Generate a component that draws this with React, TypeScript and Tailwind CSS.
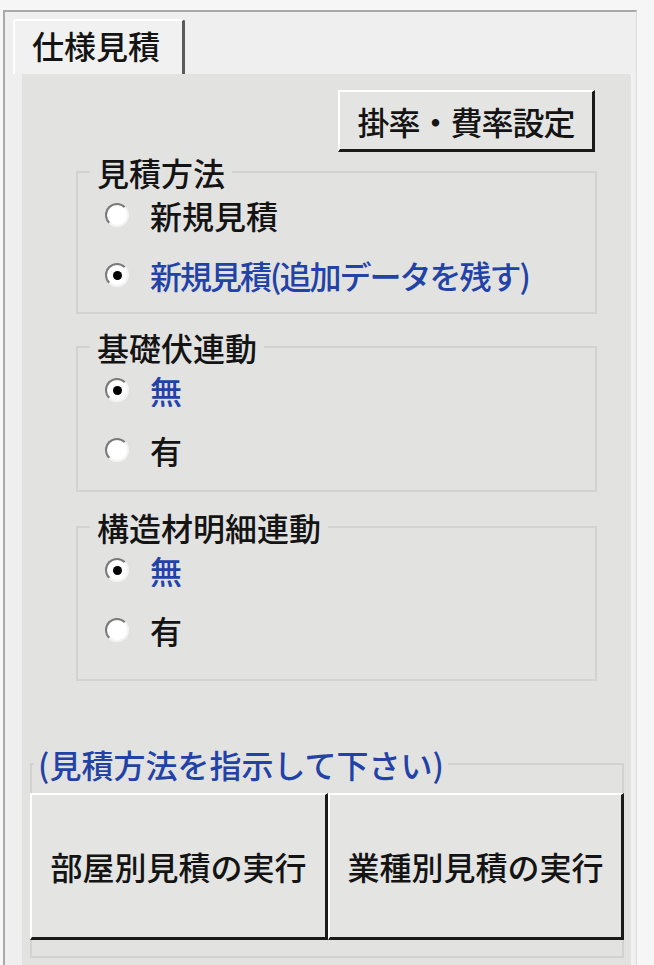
import React from "react";

const font = "font-['Noto_Sans_CJK_JP','Noto_Sans',sans-serif]";

function Radio({ checked }: { checked?: boolean }) {
  return (
    <span className="flex items-center justify-center w-[24px] h-[24px] rounded-full bg-white border-2 border-t-[#7a7a7a] border-l-[#7a7a7a] border-r-[#f4f4f4] border-b-[#f4f4f4]">
      {checked && <span className="w-[9px] h-[9px] rounded-full bg-black" />}
    </span>
  );
}

type Option = { label: string; checked?: boolean; tight?: boolean };

function RadioRow({ label, checked, tight }: Option) {
  return (
    <div className="flex items-center h-[46px] pl-[27px] gap-[21px]">
      <Radio checked={checked} />
      <span
        className={`${checked ? "text-[#2342a8]" : "text-[#141414]"} ${
          tight ? "tracking-[-2px]" : ""
        }`}
      >
        {label}
      </span>
    </div>
  );
}

function Group({
  title,
  options,
  className = "",
}: {
  title: string;
  options: Option[];
  className?: string;
}) {
  return (
    <fieldset
      className={`ml-[54px] w-[521px] border-2 border-[#d2d2d0] flex flex-col gap-[14px] ${className}`}
    >
      <legend className="ml-[12px] px-[7px] h-[40px] leading-[40px] text-[#141414]">
        {title}
      </legend>
      {options.map((o) => (
        <RadioRow key={o.label} {...o} />
      ))}
    </fieldset>
  );
}

function WinButton({ children, className = "" }: { children: React.ReactNode; className?: string }) {
  return (
    <button
      className={`flex items-center justify-center bg-[#e4e4e2] text-[#141414] border-t-2 border-l-2 border-t-white border-l-white border-r-[3px] border-b-[3px] border-r-[#1a1a1a] border-b-[#1a1a1a] ${className}`}
    >
      {children}
    </button>
  );
}

export default function App() {
  return (
    <div className={`w-[654px] h-[965px] overflow-hidden bg-[#f6f6f6] text-[32px] font-medium ${font}`}>
      <div className="ml-[3px] mt-[10px] w-[634px] h-[955px] flex flex-col bg-[#efefef] border-l-2 border-t-2 border-[#a9a9a9] border-r border-r-[#dcdcdc]">
        {/* Tab */}
        <div className="pt-[7px] pl-[8px]">
          <div className="w-[172px] h-[55px] pl-[17px] pt-[4px] leading-[40px] bg-[#f1f1f1] border-l-2 border-t-2 border-white border-r-[3px] border-r-[#5a5a5a] rounded-t-[3px] text-[#141414]">
            仕様見積
          </div>
        </div>

        {/* Panel */}
        <div className="ml-[17px] w-[611px] flex-1 bg-[#e2e2e1] border-r-2 border-r-[#f3f3f3] flex flex-col">
          <div className="flex justify-end pr-[36px] pt-[16px]">
            <WinButton className="w-[257px] h-[62px] tracking-[-1px]">掛率・費率設定</WinButton>
          </div>

          <Group
            title="見積方法"
            className="pb-[14px]"
            options={[
              { label: "新規見積" },
              { label: "新規見積(追加データを残す)", checked: true, tight: true },
            ]}
          />
          <Group
            title="基礎伏連動"
            className="mt-[13px] pb-[17px]"
            options={[{ label: "無", checked: true }, { label: "有" }]}
          />
          <Group
            title="構造材明細連動"
            className="mt-[15px] pb-[26px]"
            options={[{ label: "無", checked: true }, { label: "有" }]}
          />

          {/* Execute */}
          <fieldset className="ml-[8px] mt-[63px] w-[594px] border-2 border-[#d2d2d0] pb-[16px]">
            <legend className="ml-[2px] px-[4px] h-[40px] leading-[40px] text-[#2342a8]">
              (見積方法を指示して下さい)
            </legend>
            <div className="flex mt-[9px] -mx-[2px]">
              <WinButton className="w-[298px] h-[147px]">部屋別見積の実行</WinButton>
              <WinButton className="w-[296px] h-[147px]">業種別見積の実行</WinButton>
            </div>
          </fieldset>
        </div>
      </div>
    </div>
  );
}
